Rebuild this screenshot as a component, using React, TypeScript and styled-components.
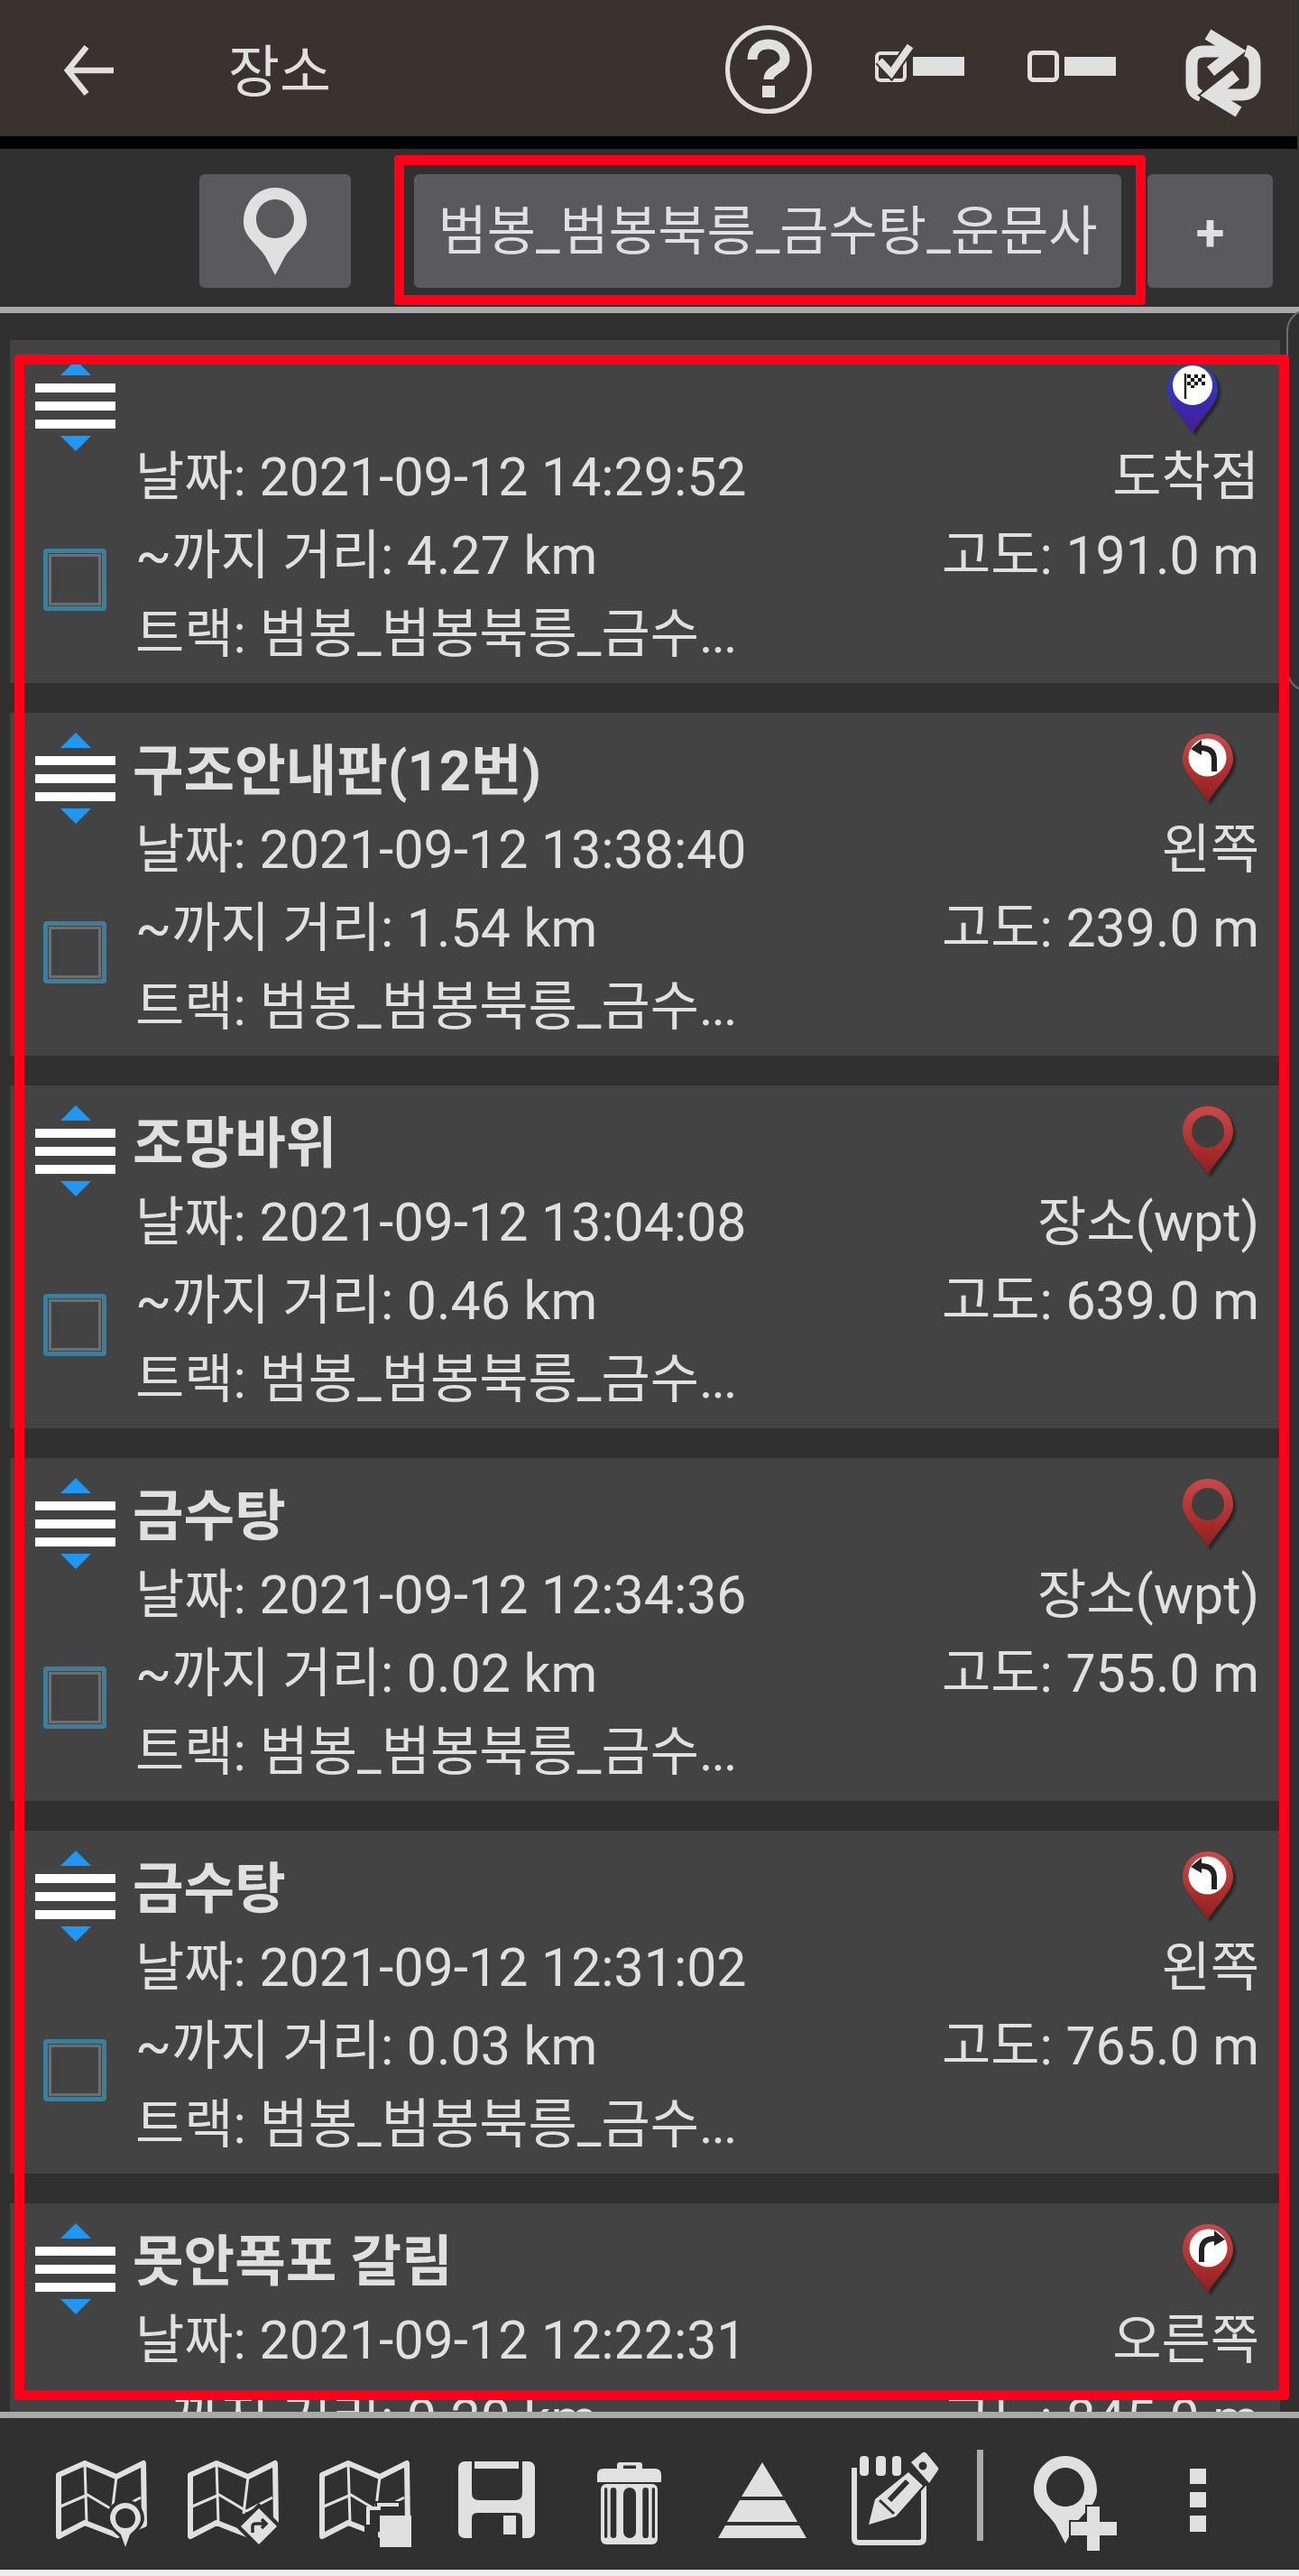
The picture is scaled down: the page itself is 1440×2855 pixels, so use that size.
import React from 'react';
import styled, { createGlobalStyle } from 'styled-components';

const INK = '#e0e0e0';
const BAR = '#303030';
const HEAD = '#3a322e';

const GlobalStyle = createGlobalStyle`
    html, body {
        margin: 0;
        padding: 0;
        background: ${BAR};
    }
    * {
        box-sizing: border-box;
    }
`;

const Page = styled.div`
    position: relative;
    width: 1440px;
    height: 2855px;
    overflow: hidden;
    display: flex;
    flex-direction: column;
    background: ${BAR};
    color: ${INK};
    font-family: Roboto, "Noto Sans CJK KR", sans-serif;
`;

const Header = styled.header`
    width: 1438px;
    height: 151px;
    flex: none;
    display: flex;
    background: ${HEAD};
    padding: 28px 0 0 70px;
`;
const HeaderSlot = styled.div<{ $w: number }>`
    width: ${(p) => p.$w}px;
    flex: none;
`;
const Title = styled.h1`
    margin: 3px 0 0 -2px;
    font-size: 62px;
    font-weight: 400;
    line-height: 100px;
`;
const BlackBand = styled.div`
    width: 1438px;
    height: 14px;
    flex: none;
    background: #030303;
`;
const Toolbar = styled.div`
    height: 175px;
    flex: none;
    display: flex;
    padding: 28px 0 0 221px;
`;
const ToolButton = styled.div<{ $w: number; $after: number }>`
    width: ${(p) => p.$w}px;
    height: 126px;
    margin-right: ${(p) => p.$after}px;
    flex: none;
    display: flex;
    align-items: center;
    justify-content: center;
    border-radius: 6px;
    background: #5a5a5c;
    font-size: 59px;
    line-height: 1;
    white-space: nowrap;
`;
const PlusText = styled.span`
    font-size: 58px;
    font-weight: 700;
    margin-top: 4px;
`;
const Divider = styled.div`
    height: 7px;
    flex: none;
    background: #a9a9a9;
    position: relative;
`;
const List = styled.div`
    height: 2326px;
    flex: none;
    overflow: hidden;
    display: flex;
    flex-direction: column;
    gap: 33px;
    padding: 30px 21px 0 11px;
`;
const Card = styled.article`
    height: 380px;
    flex: none;
    display: grid;
    grid-template-columns: 139px 1fr;
    background: #434343;
    padding-right: 23px;
`;
const LeftCol = styled.div`
    display: flex;
    flex-direction: column;
    padding: 22px 0 0 28px;
`;
const Handle = styled.div`
    width: 89px;
    height: 101px;
    display: flex;
    flex-direction: column;
    align-items: center;
`;
const Arrow = styled.span<{ $down?: boolean }>`
    width: 0;
    height: 0;
    border-left: 17px solid transparent;
    border-right: 17px solid transparent;
    border-${(p) => (p.$down ? 'top' : 'bottom')}: 17px solid #2196f3;
`;
const HandleBars = styled.div`
    width: 89px;
    margin: 9px 0 8px;
    display: flex;
    flex-direction: column;
    gap: 10px;
`;
const HandleBar = styled.span`
    height: 10px;
    background: #fff;
`;
const Check = styled.div`
    width: 70px;
    height: 69px;
    margin: 108px 0 0 9px;
    padding: 1px;
    border: 5px solid #3f7e9b;
    border-radius: 4px;
`;
const CheckInner = styled.div`
    height: 100%;
    border: 3px solid #6e6e6e;
`;
const Info = styled.div`
    min-width: 0;
    display: flex;
    flex-direction: column;
`;
const TopRow = styled.div`
    height: 107px;
    flex: none;
    display: flex;
    justify-content: space-between;
    align-items: flex-start;
    padding-top: 22px;
`;
const PlaceName = styled.h2`
    margin: -1px 0 0 -3px;
    font-size: 61.5px;
    font-weight: 700;
    line-height: 88px;
    white-space: nowrap;
`;
const Row = styled.div`
    height: 87px;
    flex: none;
    display: flex;
    justify-content: space-between;
    align-items: center;
    padding-top: 3px;
    font-size: 59px;
    line-height: 84px;
    white-space: nowrap;
`;
const Dots = styled.span`
    letter-spacing: -2px;
`;
const PinHolder = styled.div<{ $finish?: boolean }>`
    flex: none;
    margin-top: ${(p) => (p.$finish ? 4 : 0)}px;
    margin-right: ${(p) => (p.$finish ? 45 : 28)}px;
    line-height: 0;
`;
const BottomBar = styled.footer`
    height: 168px;
    flex: none;
    display: flex;
    padding: 35px 0 0 62px;
`;
const BottomSlot = styled.div<{ $w: number }>`
    width: ${(p) => p.$w}px;
    flex: none;
`;
const BarRule = styled.div`
    width: 7px;
    height: 101px;
    background: #aaa;
`;
const EdgeStrip = styled.div`
    height: 7px;
    flex: none;
    background: #eeeeee;
`;
const Icon = styled.svg<{ $top?: number }>`
    display: block;
    overflow: visible;
    margin-top: ${(p) => p.$top ?? 0}px;
`;
const NameFrame = styled.div`
    position: absolute;
    left: 437px;
    top: 172px;
    width: 833px;
    height: 166px;
    border: 11px solid #ff0019;
    border-radius: 4px;
`;
const ListFrame = styled.div`
    position: absolute;
    left: 16px;
    top: 393px;
    width: 1413px;
    height: 2267px;
    border: 11px solid #ff0019;
    border-radius: 4px;
`;
const EdgeArc = styled.div`
    position: absolute;
    left: 1426px;
    top: 342px;
    width: 50px;
    height: 425px;
    border: 2px solid #6c6c6c;
    border-radius: 32px;
`;

function BackIcon() {
    return (
        <Icon $top={22} width="56" height="56" viewBox="0 0 56 56">
            <path d="M56 28H5M26 2L5 28L26 54" fill="none" stroke={INK} strokeWidth="6.5" />
        </Icon>
    );
}

function HelpIcon() {
    return (
        <Icon width="96" height="98" viewBox="0 0 96 98">
            <ellipse cx="48" cy="49" rx="45.500" ry="46.500" fill="none" stroke={INK} strokeWidth="5" />
            <path d="M30 38C30 24 41 21 48 21C58 21 66 28 66 37C66 49 48 48 48 60" fill="none" stroke={INK} strokeWidth="11" />
            <rect x="41" y="67" width="14" height="13" fill={INK} />
        </Icon>
    );
}

function CheckedIcon() {
    return (
        <Icon $top={20} width="100" height="44" viewBox="0 0 100 44">
            <rect x="3" y="11" width="31" height="30" rx="4" fill="none" stroke={INK} strokeWidth="4" />
            <path d="M6 19L19 33L40 3" fill="none" stroke={HEAD} strokeWidth="12" />
            <path d="M6 19L19 33L40 3" fill="none" stroke={INK} strokeWidth="8" />
            <rect x="43" y="15" width="57" height="21" fill={INK} />
        </Icon>
    );
}

function UncheckedIcon() {
    return (
        <Icon $top={28} width="98" height="36" viewBox="0 0 98 36">
            <rect x="2.500" y="2.500" width="30" height="30" rx="4" fill="none" stroke={INK} strokeWidth="5" />
            <rect x="41" y="7" width="57" height="21" fill={INK} />
        </Icon>
    );
}

function SyncIcon() {
    const half = (
        <g fill="none">
            <path d="M25 3L56 22L28 44" stroke={HEAD} strokeWidth="17" />
            <path d="M46 22H21Q7 22 7 36V57Q7 68 17 71" stroke={INK} strokeWidth="13" />
            <path d="M25 3L56 22L28 44" stroke={INK} strokeWidth="13" />
        </g>
    );
    return (
        <Icon $top={7} width="84" height="92" viewBox="0 0 84 92">
            {half}
            <g transform="rotate(180 42 46)">{half}</g>
        </Icon>
    );
}

const PIN_PATH = 'M35 0C55 0 70 17 70 38C70 55 55 62 46 76L35 97L24 76C15 62 0 55 0 38C0 17 15 0 35 0Z';
const PIN_HOLE = 'M35 13C23 13 14 23 14 35C14 47 23 56 35 56C47 56 56 47 56 35C56 23 47 13 35 13Z';

function MarkerIcon() {
    return (
        <Icon width="70" height="97" viewBox="0 0 70 97">
            <path fillRule="evenodd" d={PIN_PATH + PIN_HOLE} fill={INK} />
        </Icon>
    );
}

type PinKind = 'plain' | 'left' | 'right' | 'finish';

function MapPin({ kind }: { kind: PinKind }) {
    const finish = kind === 'finish';
    const body = 'M29 1C45 1 57 13 57 29C57 45 40 58 29 77C18 58 1 45 1 29C1 13 13 1 29 1Z';
    return (
        <Icon width="58" height="78" viewBox="0 0 58 78">
            <defs>
                <linearGradient id={`pin-${kind}`} x1="0" y1="0" x2="0" y2="1">
                    <stop offset="0" stopColor={finish ? '#2448c4' : '#c84a4a'} />
                    <stop offset="0.55" stopColor={finish ? '#3a2ab0' : '#b03030'} />
                    <stop offset="1" stopColor={finish ? '#4b1a96' : '#8a1f1f'} />
                </linearGradient>
                <filter id={`soft-${kind}`}><feGaussianBlur stdDeviation="1.500" /></filter>
            </defs>
            <path d={body} fill="#000" opacity="0.45" transform="translate(3 3)" filter={`url(#soft-${kind})`} />
            <path d={body} fill={`url(#pin-${kind})`} />
            {kind === 'plain' && <circle cx="29" cy="29" r="18" fill="#3e3e3e" />}
            {(kind === 'left' || kind === 'right') && (
                <g transform={kind === 'right' ? 'translate(58 0) scale(-1 1)' : undefined}>
                    <circle cx="28.500" cy="27.500" r="21" fill="#fff" />
                    <path d="M36 43V30Q36 17 21 17" fill="none" stroke="#222" strokeWidth="6" />
                    <path d="M22 8L10 18L22 25Z" fill="#222" />
                </g>
            )}
            {finish && (
                <g>
                    <circle cx="29" cy="24" r="22" fill="#fff" />
                    <path d="M21 11V39" stroke="#111" strokeWidth="2.400" />
                    <path fill="#111" d="M23 12h4v4h-4zM31 12h4v4h-4zM39 12h4v4h-4zM27 16h4v4h-4zM35 16h4v4h-4zM23 20h4v4h-4zM31 20h4v4h-4zM39 20h4v4h-4zM27 24h4v3h-4z" />
                </g>
            )}
        </Icon>
    );
}

function MapBase() {
    return (
        <g fill="none" stroke={INK} strokeLinejoin="round">
            <path d="M3 15L32 2L67 17L97 2L98 70L68 82L32 68L3 83Z" strokeWidth="6" />
            <path d="M32 2L34 68M67 17L62 58M5 50L35 37L65 55L94 40" strokeWidth="3" />
        </g>
    );
}

function MapPinIcon() {
    return (
        <Icon width="100" height="115" viewBox="0 0 100 115">
            <g transform="translate(0 13)">
                <MapBase />
                <path d="M77 42C66 42 56 51 56 63C56 72 66 80 71 84L77 96L83 84C88 80 98 72 98 63C98 51 88 42 77 42Z" fill={BAR} />
                <path fillRule="evenodd" d="M77 46C68 46 60 53 60 63C60 71 68 77 72 81L77 95L82 81C86 77 94 71 94 63C94 53 86 46 77 46ZM77 52C84 52 88 57 88 63C88 69 84 74 77 74C70 74 66 69 66 63C66 57 70 52 77 52Z" fill={INK} />
            </g>
        </Icon>
    );
}

function MapRouteIcon() {
    return (
        <Icon width="100" height="115" viewBox="0 0 100 115">
            <g transform="translate(0 13)">
                <MapBase />
                <path d="M79 46L105 72L79 98L53 72Z" fill={BAR} />
                <path d="M79 52L99 72L79 92L59 72Z" fill={INK} />
                <path d="M72 79V72Q72 69 76 69H86M82 64L87 69L82 74" fill="none" stroke={BAR} strokeWidth="3.500" />
            </g>
        </Icon>
    );
}

function MapFileIcon() {
    return (
        <Icon width="103" height="115" viewBox="0 0 103 115">
            <g transform="translate(0 13)">
                <MapBase />
                <path d="M50 50H62V44H90V58H65V84H50Z" fill={BAR} />
                <path d="M54 70V52H66V48H88" fill="none" stroke={INK} strokeWidth="4" />
                <rect x="67" y="60" width="35" height="35" fill={INK} />
            </g>
        </Icon>
    );
}

function SaveIcon() {
    return (
        <Icon width="85" height="115" viewBox="0 0 85 115">
            <rect x="0" y="13" width="85" height="85" rx="7" fill={INK} />
            <path d="M15 13H71V48Q71 56 63 56H23Q15 56 15 48Z" fill={BAR} />
            <rect x="18" y="13" width="49" height="8" fill={INK} />
            <path d="M15 98V76Q15 70 21 70H65Q71 70 71 76V98Z" fill={BAR} />
            <rect x="50" y="73" width="14" height="21" fill={INK} />
        </Icon>
    );
}

function TrashIcon() {
    const slots = [[8, 3.3], [14.7, 6.6], [29, 14], [50.3, 6.7], [60.7, 3.3]];
    return (
        <Icon width="71" height="115" viewBox="0 0 71 115">
            <path fillRule="evenodd" d="M22 22V17Q22 14 25 14H47Q50 14 50 17V22ZM29 17.500H43V21H29Z" fill={INK} />
            <path d="M0 36V28Q0 21 7 21H64Q71 21 71 28V36Z" fill={INK} />
            <rect x="4" y="38" width="63" height="67" rx="6" fill={INK} />
            {slots.map(([x, w]) => (
                <rect key={x} x={x} y="42" width={w} height="56" rx={w / 2} fill={BAR} />
            ))}
        </Icon>
    );
}

function ConeIcon() {
    return (
        <Icon width="98" height="115" viewBox="0 0 98 115">
            <path d="M49 14L72 52H26Z" fill={INK} />
            <path d="M24 56H74L88 80H10Z" fill={INK} />
            <path d="M8 84H90L98 98H0Z" fill={INK} />
        </Icon>
    );
}

function NoteIcon() {
    return (
        <Icon width="98" height="108" viewBox="0 0 98 108">
            <path d="M4 20V98Q4 103 9 103H76Q81 103 81 98V40" fill="none" stroke={INK} strokeWidth="6" />
            <rect x="10" y="7" width="10" height="22" rx="4" fill={INK} />
            <rect x="28" y="7" width="11" height="22" rx="4" fill={INK} />
            <rect x="46" y="7" width="10" height="22" rx="4" fill={INK} />
            <path d="M64 25L80 40L50 74L20 83L27 55Z" fill={INK} stroke={BAR} strokeWidth="5" paintOrder="stroke" />
            <path d="M63 35L43 56" stroke={BAR} strokeWidth="6" />
            <path d="M32 56L48 71" stroke={BAR} strokeWidth="3" />
            <path fillRule="evenodd" d="M67 14L80 3Q82 2 84 4L97 20Q98 22 96 24L87 37ZM80 13.500A4.500 4.500 0 1 0 80 22.500A4.500 4.500 0 1 0 80 13.500Z" fill={INK} />
        </Icon>
    );
}

function AddPlaceIcon() {
    return (
        <Icon width="92" height="112" viewBox="0 0 92 112">
            <g transform="translate(0 7)">
                <path fillRule="evenodd" d={PIN_PATH + PIN_HOLE} fill={INK} />
            </g>
            <path d="M59 63H73V80H92V95H73V112H59V95H41V80H59Z" fill={INK} stroke={BAR} strokeWidth="4" paintOrder="stroke" />
        </Icon>
    );
}

function MoreIcon() {
    return (
        <Icon width="18" height="92" viewBox="0 0 18 92">
            <rect y="21" width="18" height="17" fill={INK} />
            <rect y="47" width="18" height="17" fill={INK} />
            <rect y="73" width="18" height="18" fill={INK} />
        </Icon>
    );
}

const places: { name: string; pin: PinKind; date: string; kind: string; dist: string; alt: string }[] = [
    { name: '', pin: 'finish', date: '2021-09-12 14:29:52', kind: '도착점', dist: '4.27', alt: '191.0' },
    { name: '구조안내판(12번)', pin: 'left', date: '2021-09-12 13:38:40', kind: '왼쪽', dist: '1.54', alt: '239.0' },
    { name: '조망바위', pin: 'plain', date: '2021-09-12 13:04:08', kind: '장소(wpt)', dist: '0.46', alt: '639.0' },
    { name: '금수탕', pin: 'plain', date: '2021-09-12 12:34:36', kind: '장소(wpt)', dist: '0.02', alt: '755.0' },
    { name: '금수탕', pin: 'left', date: '2021-09-12 12:31:02', kind: '왼쪽', dist: '0.03', alt: '765.0' },
    { name: '못안폭포 갈림', pin: 'right', date: '2021-09-12 12:22:31', kind: '오른쪽', dist: '0.20', alt: '845.0' },
];

function App() {
    return (
        <Page>
            <GlobalStyle />
            <Header>
                <HeaderSlot $w={185}><BackIcon /></HeaderSlot>
                <HeaderSlot $w={549}><Title>장소</Title></HeaderSlot>
                <HeaderSlot $w={165}><HelpIcon /></HeaderSlot>
                <HeaderSlot $w={170}><CheckedIcon /></HeaderSlot>
                <HeaderSlot $w={175}><UncheckedIcon /></HeaderSlot>
                <HeaderSlot $w={84}><SyncIcon /></HeaderSlot>
            </Header>
            <BlackBand />
            <Toolbar>
                <ToolButton $w={168} $after={70}><MarkerIcon /></ToolButton>
                <ToolButton $w={784} $after={29}>범봉_범봉북릉_금수탕_운문사</ToolButton>
                <ToolButton $w={139} $after={0}><PlusText>+</PlusText></ToolButton>
            </Toolbar>
            <Divider />
            <List>
                {places.map((place) => (
                    <Card key={place.date}>
                        <LeftCol>
                            <Handle>
                                <Arrow />
                                <HandleBars>
                                    <HandleBar />
                                    <HandleBar />
                                    <HandleBar />
                                </HandleBars>
                                <Arrow $down />
                            </Handle>
                            <Check><CheckInner /></Check>
                        </LeftCol>
                        <Info>
                            <TopRow>
                                <PlaceName>{place.name}</PlaceName>
                                <PinHolder $finish={place.pin === 'finish'}><MapPin kind={place.pin} /></PinHolder>
                            </TopRow>
                            <Row>
                                <span>날짜: {place.date}</span>
                                <span>{place.kind}</span>
                            </Row>
                            <Row>
                                <span>~까지 거리: {place.dist} km</span>
                                <span>고도: {place.alt} m</span>
                            </Row>
                            <Row>
                                <span>트랙: 범봉_범봉북릉_금수<Dots>...</Dots></span>
                            </Row>
                        </Info>
                    </Card>
                ))}
            </List>
            <Divider />
            <BottomBar>
                <BottomSlot $w={146}><MapPinIcon /></BottomSlot>
                <BottomSlot $w={146}><MapRouteIcon /></BottomSlot>
                <BottomSlot $w={154}><MapFileIcon /></BottomSlot>
                <BottomSlot $w={154}><SaveIcon /></BottomSlot>
                <BottomSlot $w={134}><TrashIcon /></BottomSlot>
                <BottomSlot $w={147}><ConeIcon /></BottomSlot>
                <BottomSlot $w={140}><NoteIcon /></BottomSlot>
                <BottomSlot $w={63}><BarRule /></BottomSlot>
                <BottomSlot $w={173}><AddPlaceIcon /></BottomSlot>
                <BottomSlot $w={18}><MoreIcon /></BottomSlot>
            </BottomBar>
            <EdgeStrip />
            <EdgeArc />
            <NameFrame />
            <ListFrame />
        </Page>
    );
}

export default App;
